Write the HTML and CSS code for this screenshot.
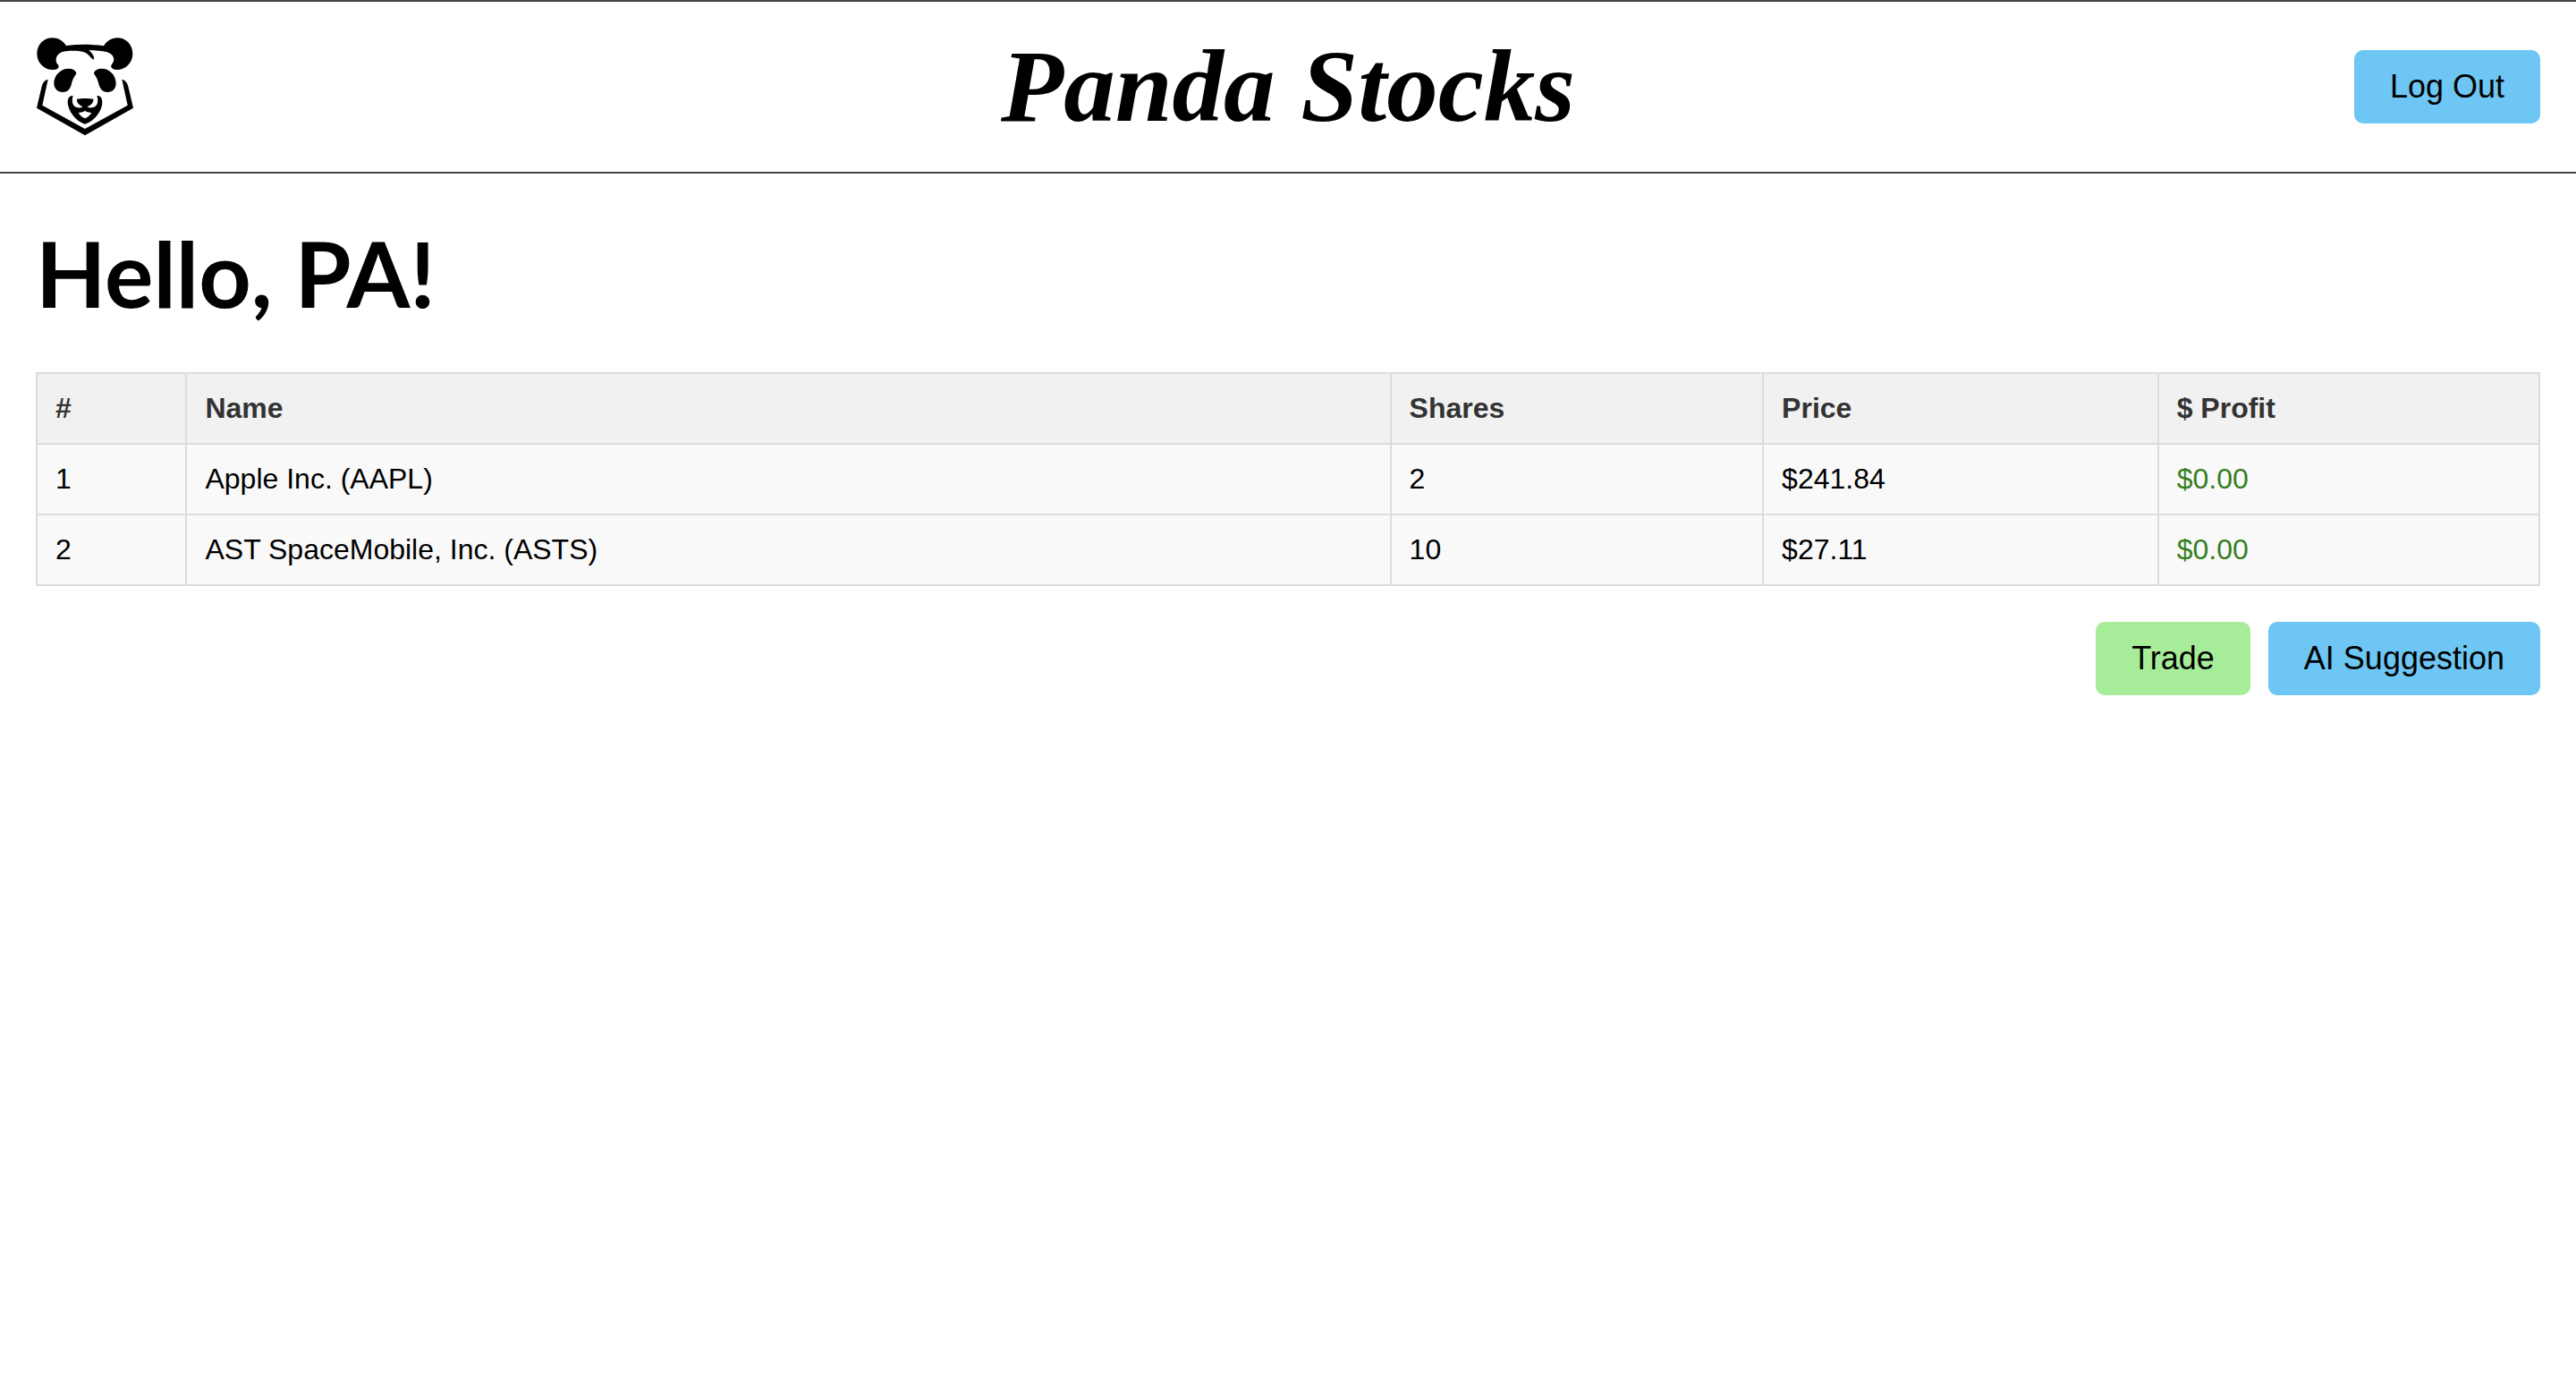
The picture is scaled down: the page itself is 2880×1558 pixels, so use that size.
FILE: index.html
```html
<!DOCTYPE html>
<html lang="en">
<head>
  <meta charset="UTF-8">
  <meta name="viewport" content="width=device-width, initial-scale=1.0">
  <title>Panda Stocks</title>
  <link rel="stylesheet" href="styles.css">
</head>
<body>
  <header class="header">
    <svg class="logo" viewBox="120 126 330 330" role="img" aria-label="Panda">
      <!-- Ears and forehead -->
      <path d="M222 153 C211 136 195 127 176 127 C146 127 124 150 124 180 C124 211 148 234 178 234 C188 234 196 230 197 224 C198 218 191 216 189 208 C184 190 198 174 220 172 C254 169 281 170 296 184 C304 191 306 197 315 200 C317 190 311 179 298 168 C318 169 343 170 360 175 C378 181 386 196 380 208 C377 215 371 218 373 225 C376 231 383 234 392 234 C422 234 445 210 445 180 C445 150 423 127 393 127 C374 127 358 138 348 154 C307 148 264 148 222 153 Z"/>
      <!-- Eyes -->
      <path d="M229 230 C203 230 181 253 181 279 C181 297 193 309 211 309 C225 309 234 301 239 285 C244 265 249 257 256 247 C256 236 243 230 229 230 Z"/>
      <path d="M342 230 C368 230 389 253 389 279 C389 297 378 309 360 309 C346 309 337 301 332 285 C327 265 322 257 315 247 C315 236 328 230 342 230 Z"/>
      <!-- Face outline -->
      <path d="M161 266 C148 269 142 280 139 294 L123 362 L285 454 L447 362 L431 294 C428 280 422 269 409 266 L428 353 L285 432 L142 353 Z"/>
      <!-- Nose and mouth -->
      <path fill-rule="evenodd" d="M245 321 C232 320 227 331 227 343 C228 370 251 406 285 416 C319 406 343 370 343 343 C343 331 338 320 325 321 C332 340 327 359 309 361 C302 362 294 361 293 357 C306 352 314 344 313 332 C299 329 272 329 258 332 C257 344 265 352 277 357 C276 361 268 362 261 361 C243 359 239 340 245 321 Z M263 378 C272 377 280 375 285 371 C290 375 298 377 307 378 C302 387 295 393 285 397 C275 393 268 387 263 378 Z"/>
    </svg>
    <h1 class="title">Panda Stocks</h1>
    <button class="btn btn-blue logout" type="button">Log Out</button>
  </header>

  <main class="container">
    <h2 class="greeting">Hello, PA!</h2>

    <table class="stocks">
      <thead>
        <tr>
          <th>#</th>
          <th>Name</th>
          <th>Shares</th>
          <th>Price</th>
          <th>$ Profit</th>
        </tr>
      </thead>
      <tbody>
        <tr>
          <td>1</td>
          <td>Apple Inc. (AAPL)</td>
          <td>2</td>
          <td>$241.84</td>
          <td class="profit">$0.00</td>
        </tr>
        <tr>
          <td>2</td>
          <td>AST SpaceMobile, Inc. (ASTS)</td>
          <td>10</td>
          <td>$27.11</td>
          <td class="profit">$0.00</td>
        </tr>
      </tbody>
    </table>

    <div class="actions">
      <button class="btn btn-green" type="button">Trade</button>
      <button class="btn btn-blue" type="button">AI Suggestion</button>
    </div>
  </main>
</body>
</html>
```

FILE: styles.css
```css
body {
  margin: 0;
  font-family: "Liberation Sans", Arial, sans-serif;
  font-size: 32px;
  background-color: #fff;
  color: #000;
}

.header {
  display: grid;
  grid-template-columns: 1fr auto 1fr;
  align-items: center;
  padding: 40px;
  border-top: 2px solid #444;
  border-bottom: 2px solid #444;
}

.logo {
  display: block;
  width: 110px;
  height: 110px;
}

.title {
  margin: 0;
  font-family: "Liberation Serif", "Times New Roman", serif;
  font-size: 115px;
  font-style: italic;
  font-weight: bold;
  line-height: 110px;
}

.logout {
  justify-self: end;
}

.container {
  padding: 40px;
}

.greeting {
  margin: 0 0 40px;
  font-family: Lato, sans-serif;
  font-size: 102px;
  font-weight: bold;
  line-height: 142px;
}

.stocks {
  width: 100%;
  border-collapse: collapse;
  line-height: 37px;
}

.stocks th,
.stocks td {
  padding: 20px;
  border: 2px solid #dcdcdc;
  text-align: left;
}

.stocks th {
  background-color: #f1f1f1;
  color: #333;
}

.stocks td {
  background-color: #f9f9f9;
}

.stocks .profit {
  color: #377e22;
}

.actions {
  display: flex;
  justify-content: flex-end;
  gap: 20px;
  margin-top: 40px;
}

.btn {
  padding: 20px 40px;
  border: none;
  border-radius: 10px;
  font-family: inherit;
  font-size: 36px;
  line-height: 42px;
  color: #000;
  cursor: pointer;
}

.btn-blue {
  background-color: #6dc6f3;
}

.btn-green {
  background-color: #a7ed99;
}

.btn:hover {
  opacity: 0.9;
}
```
